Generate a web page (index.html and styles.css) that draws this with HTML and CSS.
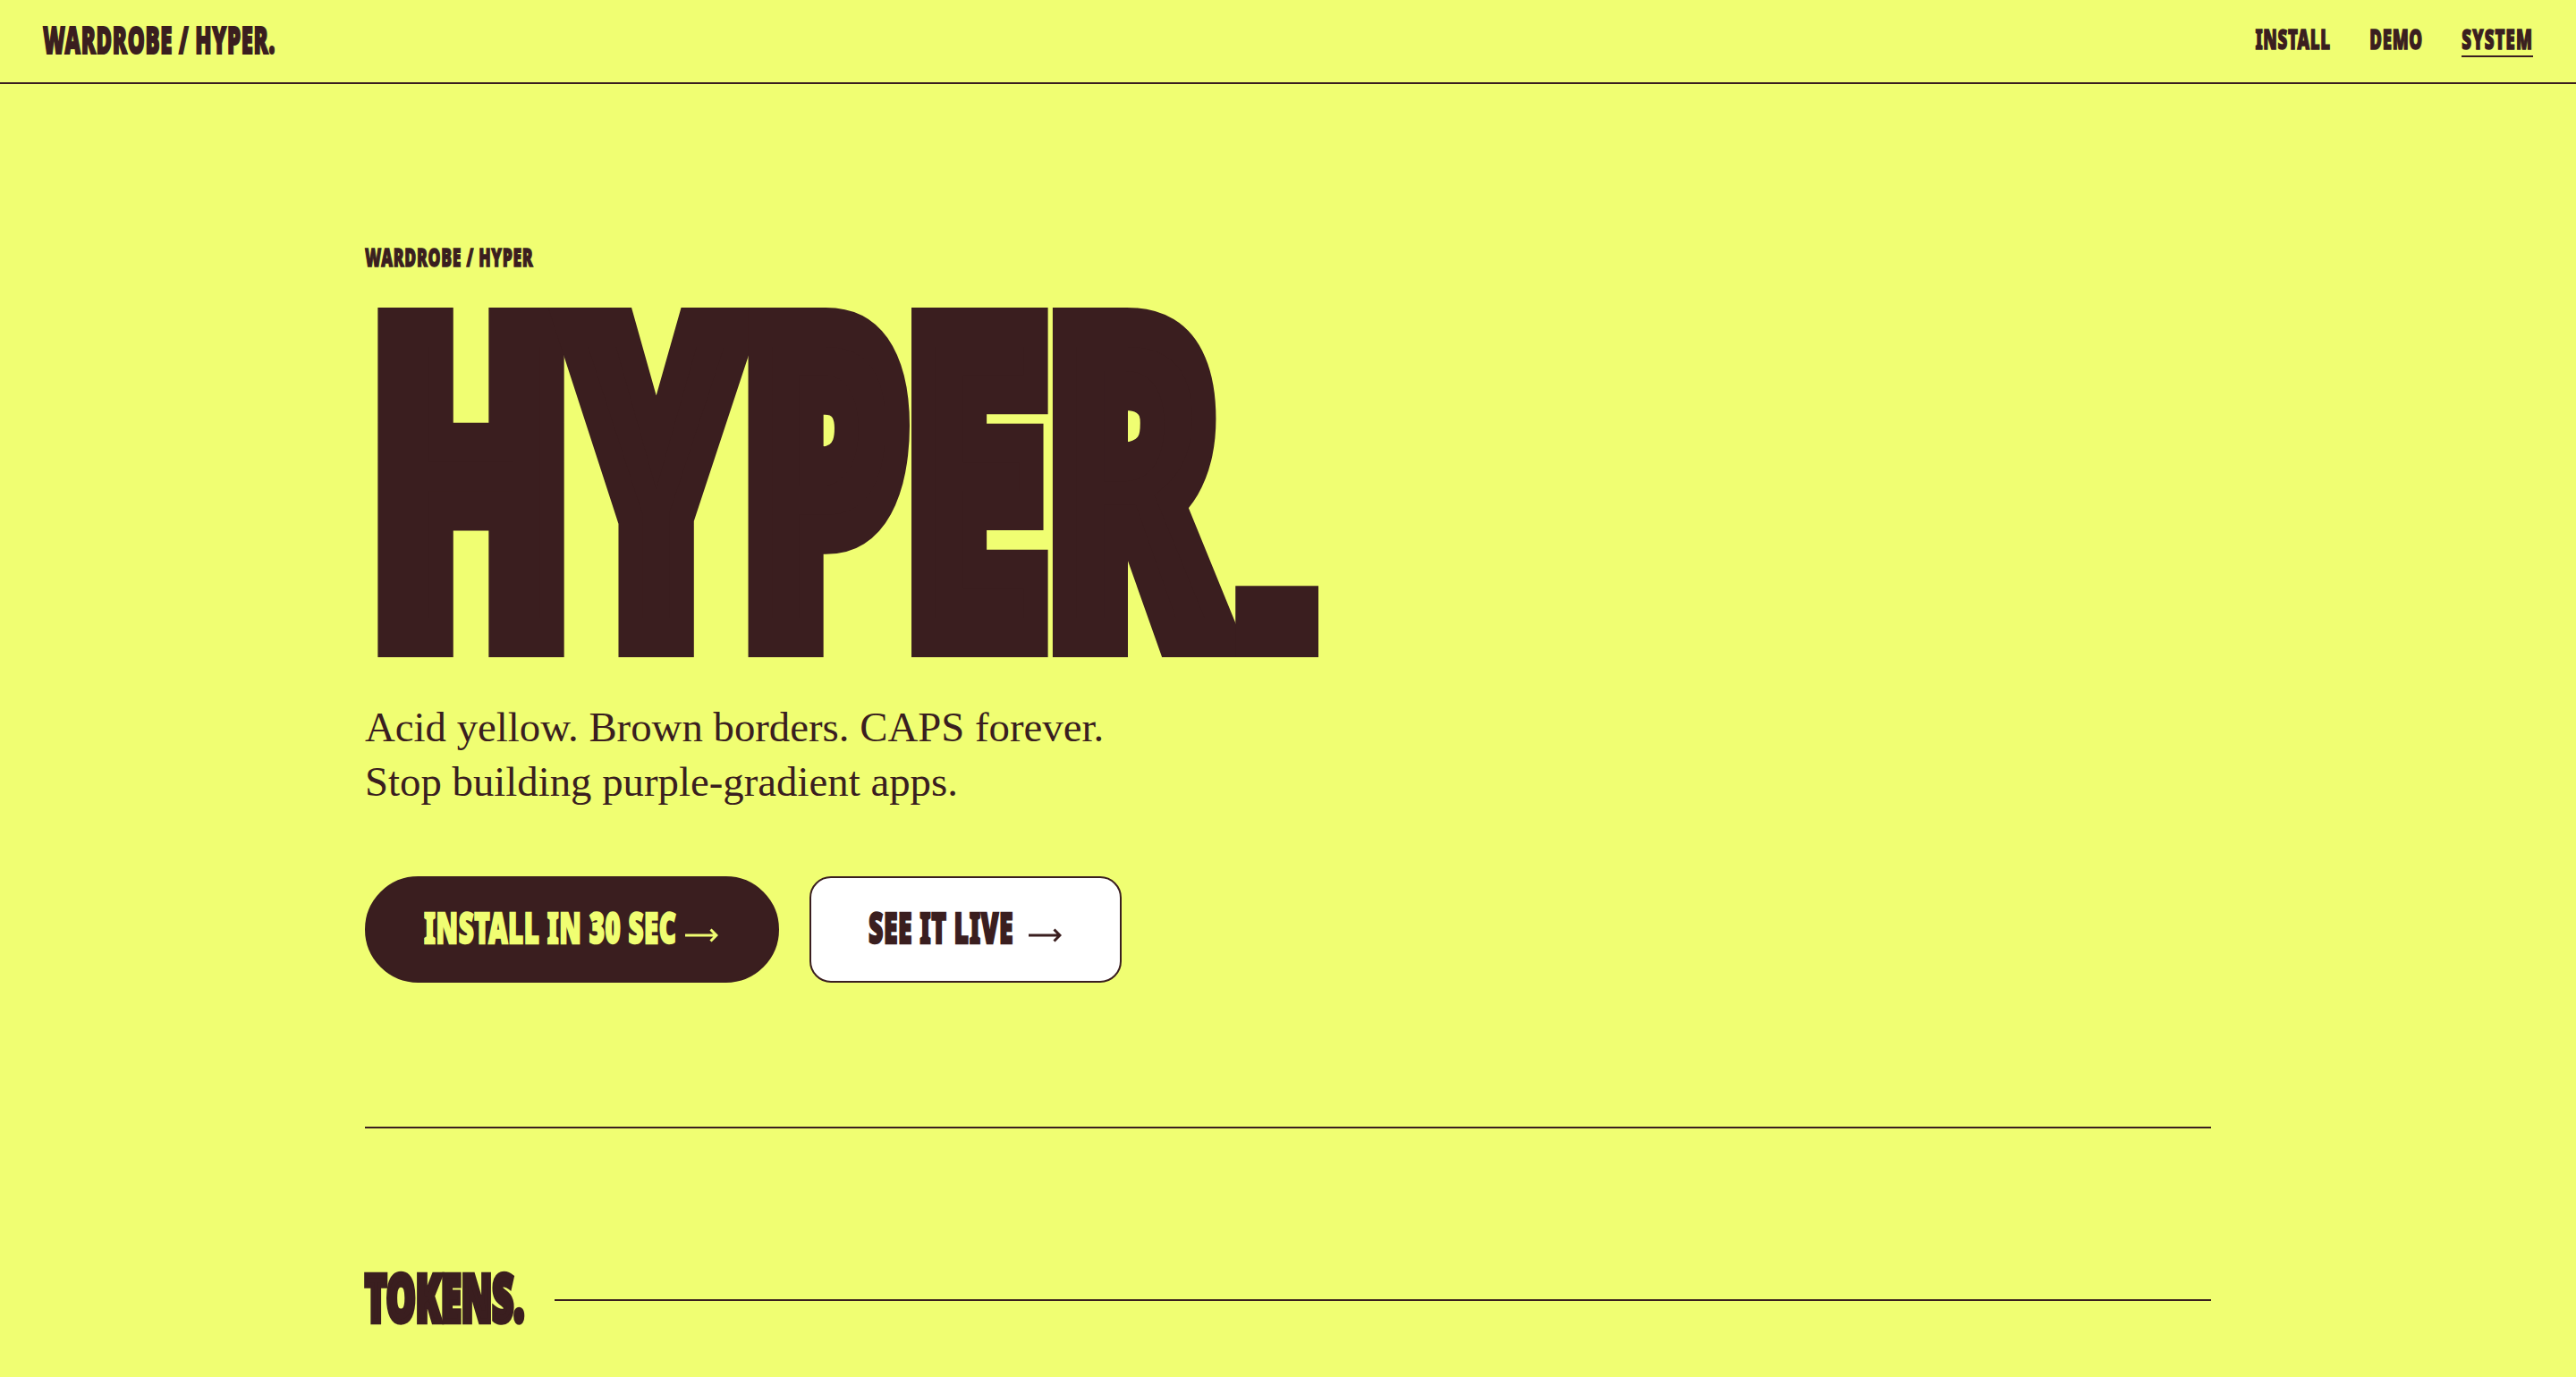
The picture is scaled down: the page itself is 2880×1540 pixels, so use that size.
FILE: index.html
```html
<!DOCTYPE html>
<html lang="en">
<head>
<meta charset="utf-8">
<title>Wardrobe / Hyper</title>
<link rel="stylesheet" href="styles.css">
</head>
<body>
<header class="topbar">
  <a class="logo" href="#">WARDROBE / HYPER.</a>
  <nav class="nav">
    <a href="#">INSTALL</a>
    <a href="#">DEMO</a>
    <a href="#" class="active">SYSTEM</a>
  </nav>
</header>
<main class="page">
  <section class="hero">
    <p class="eyebrow">WARDROBE / HYPER</p>
    <h1 class="title">HYPER<span class="dot">.</span></h1>
    <p class="lede">Acid yellow. Brown borders. CAPS forever.<br>Stop building purple-gradient apps.</p>
    <div class="actions">
      <a class="btn btn-primary" href="#">
        <span class="btn-label">INSTALL IN 30 SEC</span>
        <svg class="arrow" width="37" height="16" viewBox="0 0 37 16" aria-hidden="true"><path d="M0 8H35M28.5 1.5L35 8L28.5 14.5" fill="none" stroke="currentColor" stroke-width="3"/></svg>
      </a>
      <a class="btn btn-ghost" href="#">
        <span class="btn-label">SEE IT LIVE</span>
        <svg class="arrow" width="37" height="16" viewBox="0 0 37 16" aria-hidden="true"><path d="M0 8H35M28.5 1.5L35 8L28.5 14.5" fill="none" stroke="currentColor" stroke-width="3"/></svg>
      </a>
    </div>
  </section>
  <hr class="rule">
  <section class="tokens">
    <h2 class="section-title">TOKENS.</h2>
    <span class="section-line"></span>
  </section>
</main>
</body>
</html>
```

FILE: styles.css
```css
* { box-sizing: border-box; }
html, body { margin: 0; padding: 0; }
body {
  background: #f0fe72;
  color: #3a1e1f;
  font-family: "Noto Sans", "DejaVu Sans", sans-serif;
  min-height: 1700px;
}
a { color: inherit; text-decoration: none; }

/* condensed display type: heavy sans, squeezed horizontally */
.logo, .nav a, .eyebrow, .title, .btn-label, .section-title {
  font-family: "Noto Sans", "DejaVu Sans", sans-serif;
  font-weight: 900;
  white-space: nowrap;
}

.topbar {
  height: 94px;
  padding: 0 48px;
  border-bottom: 2px solid #3a1e1f;
  display: flex;
  justify-content: space-between;
  align-items: flex-start;
}
.logo {
  display: block;
  margin-top: 23px;
  font-size: 42px;
  line-height: 1;
  letter-spacing: 0.03em;
  -webkit-text-stroke: 2.1px currentColor;
  transform: scaleX(0.569);
  transform-origin: left center;
}
.nav {
  display: flex;
  gap: 70px;
  margin-top: 29px;
  transform: scaleX(0.62);
  transform-origin: right center;
}
.nav a {
  display: block;
  font-size: 30px;
  line-height: 1;
  letter-spacing: 0.04em;
  -webkit-text-stroke: 1.5px currentColor;
  padding-bottom: 3px;
  border-bottom: 2px solid transparent;
}
.nav a.active {
  border-bottom-color: #3a1e1f;
  letter-spacing: 0.06em;
}

.page {
  width: 2064px;
  margin: 0 auto;
  padding-bottom: 200px;
}
.hero { padding-top: 175px; }
.eyebrow {
  margin: 0;
  font-size: 28.4px;
  line-height: 36px;
  letter-spacing: 0.04em;
  -webkit-text-stroke: 1.4px currentColor;
  transform: scaleX(0.619);
  transform-origin: left center;
}
.title {
  margin: 0 0 0 5px;
  font-size: 486px;
  line-height: 438px;
  letter-spacing: -8px;
  -webkit-text-stroke: 44px currentColor;
  transform: scaleX(0.61);
  transform-origin: left center;
}
.title .dot {
  display: inline-block;
  margin-left: -59px;
  vertical-align: -22px;
  font-family: "DejaVu Sans", sans-serif;
  font-weight: 700;
  font-size: 422px;
  line-height: 0;
  -webkit-text-stroke-width: 0;
  transform: scaleX(2.05);
  transform-origin: left center;
}
.lede {
  margin: 40px 0 0;
  font-family: "Liberation Serif", "Times New Roman", serif;
  font-size: 46.8px;
  line-height: 61px;
}
.actions {
  display: flex;
  gap: 34px;
  margin-top: 75px;
}
.btn {
  height: 119px;
  display: flex;
  align-items: center;
  justify-content: space-between;
  border: 2px solid #3a1e1f;
  padding: 0 66px 0 64px;
}
.btn-label {
  flex: 0 0 0;
  width: 0;
  min-width: 0;
  margin-bottom: 4px;
  font-size: 47px;
  line-height: 1;
  letter-spacing: 0.02em;
  -webkit-text-stroke: 2.35px currentColor;
  transform-origin: left center;
}
.arrow {
  flex: 0 0 auto;
  display: block;
  margin-top: 13px;
}
.btn-primary {
  width: 463px;
  background: #3a1e1f;
  color: #f0fe72;
  border-radius: 60px;
}
.btn-primary .btn-label { transform: scaleX(0.626); }
.btn-ghost {
  width: 349px;
  background: #ffffff;
  border-radius: 24px;
  padding-right: 65px;
}
.btn-ghost .btn-label { transform: scaleX(0.604); }

.rule {
  margin: 161px 0 0;
  border: 0;
  height: 2px;
  background: #3a1e1f;
}
.tokens {
  margin-top: 152px;
  display: flex;
  align-items: flex-start;
  gap: 31px;
}
.section-title {
  flex: 0 0 181px;
  min-width: 0;
  margin: 0;
  font-size: 72px;
  line-height: 1;
  letter-spacing: 0;
  -webkit-text-stroke: 6.5px currentColor;
  transform: scaleX(0.575);
  transform-origin: left center;
}
.section-line {
  flex: 1;
  height: 2px;
  background: #3a1e1f;
  margin-top: 39px;
}
```
